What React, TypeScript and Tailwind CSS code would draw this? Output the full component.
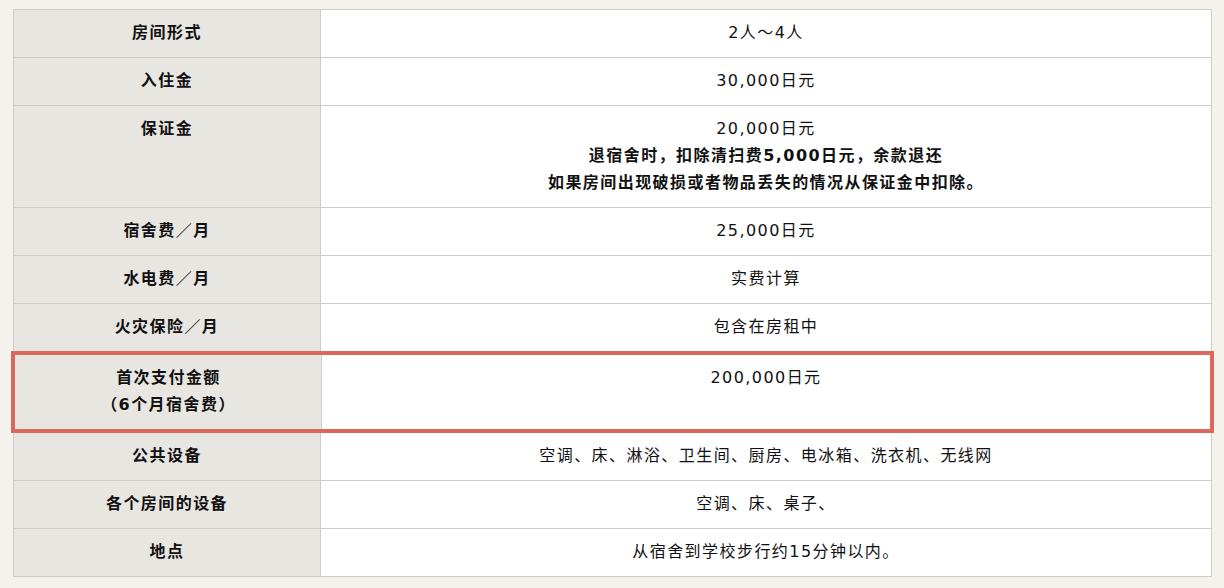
const rows: { label: string[]; value: string[]; boldFrom?: number; highlight?: boolean }[] = [
  { label: ["房间形式"], value: ["2人～4人"] },
  { label: ["入住金"], value: ["30,000日元"] },
  {
    label: ["保证金"],
    value: ["20,000日元", "退宿舍时，扣除清扫费5,000日元，余款退还", "如果房间出现破损或者物品丢失的情况从保证金中扣除。"],
    boldFrom: 1,
  },
  { label: ["宿舍费／月"], value: ["25,000日元"] },
  { label: ["水电费／月"], value: ["实费计算"] },
  { label: ["火灾保险／月"], value: ["包含在房租中"] },
  { label: ["首次支付金额", "（6个月宿舍费）"], value: ["200,000日元"], highlight: true },
  { label: ["公共设备"], value: ["空调、床、淋浴、卫生间、厨房、电冰箱、洗衣机、无线网"] },
  { label: ["各个房间的设备"], value: ["空调、床、桌子、"] },
  { label: ["地点"], value: ["从宿舍到学校步行约15分钟以内。"] },
];

export default function App() {
  return (
    <div
      className="w-[1224px] h-[588px] bg-[#f4f2ed] pt-[9px] px-[13px] text-[#111] text-[16px] leading-[27px] tracking-[0.09em]"
      style={{ fontFamily: "'DejaVu Sans', 'Noto Sans CJK SC', sans-serif" }}
    >
      <div className="border-t border-[#cccccc] w-[1199px]">
        {rows.map((r, i) => (
          <div
            key={i}
            className={
              r.highlight
                ? "flex -mx-[2px] -mt-px border-[4px] border-[#d9695a] relative"
                : "flex border-b border-x border-[#cccccc]"
            }
          >
            <div
              className={`w-[307px] shrink-0 bg-[#e8e6e1] border-r border-[#cccccc] text-center font-bold pt-[9px] pb-[11px] ${
                r.highlight ? "pl-[1px]" : ""
              }`}
            >
              {r.label.map((l, j) => (
                <div key={j}>{l}</div>
              ))}
            </div>
            <div className="flex-1 bg-white text-center pt-[9px] pb-[11px]">
              {r.value.map((v, j) => (
                <div key={j} className={r.boldFrom !== undefined && j >= r.boldFrom ? "font-bold" : ""}>
                  {v}
                </div>
              ))}
            </div>
          </div>
        ))}
      </div>
    </div>
  );
}
